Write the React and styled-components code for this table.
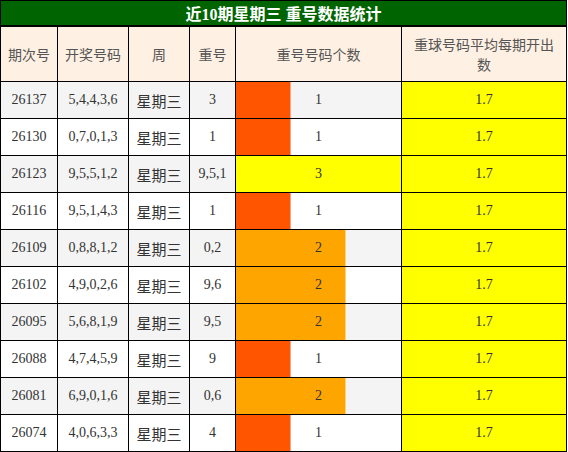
import React from 'react';
import styled, { createGlobalStyle } from 'styled-components';

const GlobalStyle = createGlobalStyle`
  html, body {
    margin: 0;
    padding: 0;
    background: #ffffff;
  }
`;

const COLS = '56px 70px 60px 45px 165px 164px';

const Board = styled.div`
  display: grid;
  grid-template-columns: ${COLS};
  grid-template-rows: 25px 54px;
  grid-auto-rows: 36px;
  gap: 1px;
  padding: 1px;
  width: max-content;
  background: #000;
  font-family: "Liberation Serif", "Noto Sans CJK SC", serif;
`;

const Title = styled.div`
  grid-column: 1 / -1;
  border-bottom: 1px solid #000;
  background: #006400;
  color: #fff;
  font-weight: bold;
  font-size: 16px;
  display: flex;
  align-items: center;
  justify-content: center;
`;

const Head = styled.div`
  background: #fef0e2;
  color: #555;
  font-family: "Noto Sans CJK SC", sans-serif;
  font-size: 14px;
  line-height: 20px;
  display: flex;
  align-items: center;
  justify-content: center;
  text-align: center;
  padding: ${(p) => (p.$wide ? '0 8px' : '0 2px')};
  box-sizing: border-box;
`;

const Cell = styled.div`
  background: ${(p) => (p.$yellow ? '#ffff00' : p.$odd ? '#f4f4f4' : '#ffffff')};
  color: #333;
  font-size: ${(p) => (p.$cjk ? '15px' : '14px')};
  display: flex;
  align-items: center;
  justify-content: center;
  white-space: nowrap;
`;

const BarCell = styled.div`
  display: grid;
  background: ${(p) => (p.$odd ? '#f4f4f4' : '#ffffff')};
  color: #333;
  font-size: 14px;
`;

const Bar = styled.div`
  grid-area: 1 / 1;
  justify-self: start;
  height: 100%;
  box-sizing: border-box;
  background: ${(p) => p.$color};
  border-right: ${(p) => (p.$full ? 'none' : `1px solid ${p.$edge}`)};
`;

const BarLabel = styled.div`
  grid-area: 1 / 1;
  display: flex;
  align-items: center;
  justify-content: center;
`;

const BAR = {
  1: { color: '#ff5500', edge: '#ffa080' },
  2: { color: '#ffa500', edge: '#ffd080' },
  3: { color: '#ffff00', edge: '#ffff00' },
};

const rows = [
  ['26137', '5,4,4,3,6', '3', 1],
  ['26130', '0,7,0,1,3', '1', 1],
  ['26123', '9,5,5,1,2', '9,5,1', 3],
  ['26116', '9,5,1,4,3', '1', 1],
  ['26109', '0,8,8,1,2', '0,2', 2],
  ['26102', '4,9,0,2,6', '9,6', 2],
  ['26095', '5,6,8,1,9', '9,5', 2],
  ['26088', '4,7,4,5,9', '9', 1],
  ['26081', '6,9,0,1,6', '0,6', 2],
  ['26074', '4,0,6,3,3', '4', 1],
];

const heads = ['期次号', '开奖号码', '周', '重号', '重号号码个数', '重球号码平均每期开出数'];

export default function App() {
  return (
    <>
      <GlobalStyle />
      <Board>
        <Title>近10期星期三 重号数据统计</Title>
        {heads.map((h, i) => (
          <Head key={h} $wide={i === heads.length - 1}>{h}</Head>
        ))}
        {rows.map(([issue, draw, repeat, count], i) => {
          const odd = i % 2 === 0;
          const bar = BAR[count];
          return (
            <React.Fragment key={issue}>
              <Cell $odd={odd}>{issue}</Cell>
              <Cell $odd={odd}>{draw}</Cell>
              <Cell $odd={odd} $cjk>星期三</Cell>
              <Cell $odd={odd}>{repeat}</Cell>
              <BarCell $odd={odd}>
                <Bar
                  $color={bar.color}
                  $edge={bar.edge}
                  $full={count === 3}
                  style={{ width: `${Math.round((count / 3) * 165)}px` }}
                />
                <BarLabel>{count}</BarLabel>
              </BarCell>
              <Cell $yellow>1.7</Cell>
            </React.Fragment>
          );
        })}
      </Board>
    </>
  );
}
